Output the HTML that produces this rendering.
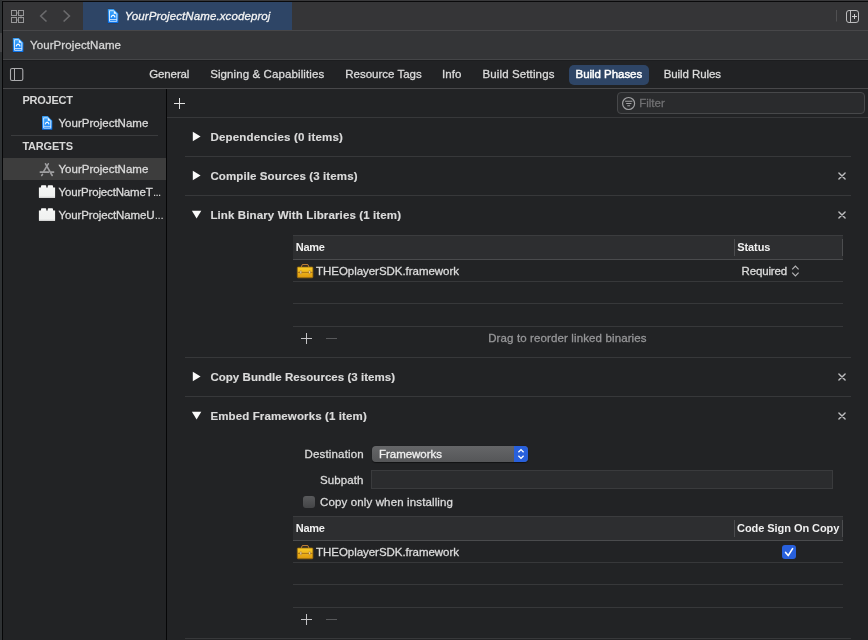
<!DOCTYPE html>
<html><head><meta charset="utf-8"><title>Xcode</title>
<style>
html,body{margin:0;padding:0;}
body{width:868px;height:640px;overflow:hidden;position:relative;background:#222325;font-family:"Liberation Sans",sans-serif;}
.a{position:absolute;}
.t{position:absolute;white-space:pre;line-height:1;-webkit-text-stroke:0.3px currentColor;}
#txt{position:absolute;left:0;top:0;width:868px;height:640px;will-change:transform;}
svg{position:absolute;overflow:visible;}
.hl{position:absolute;height:1px;}
</style></head><body>
<!-- frame -->
<div class="a" style="left:0;top:0;width:868px;height:1px;background:#39393b"></div>
<div class="a" style="left:0;top:1px;width:868px;height:1px;background:#0a0a0b"></div>
<!-- toolbar row 1 -->
<div class="a" style="left:3px;top:2px;width:865px;height:28px;background:#353537"></div>
<div class="a" style="left:83px;top:2px;width:209px;height:28px;background:#2e4566"></div>
<div class="hl" style="left:3px;top:30px;width:865px;background:#474749"></div>
<!-- row 2 -->
<div class="a" style="left:3px;top:31px;width:865px;height:28px;background:#343537"></div>
<div class="hl" style="left:3px;top:59px;width:865px;background:#454648"></div>
<div class="hl" style="left:3px;top:60px;width:865px;background:#1c1d1f;z-index:1"></div>
<!-- tab row -->
<div class="a" style="left:3px;top:60px;width:865px;height:28px;background:#212224"></div>
<div class="hl" style="left:3px;top:88px;width:865px;background:#48484a"></div>
<!-- sidebar -->
<div class="a" style="left:3px;top:89px;width:163px;height:551px;background:#222325"></div>
<div class="a" style="left:166px;top:89px;width:1px;height:551px;background:#060607"></div>
<!-- left frame -->
<div class="a" style="left:0;top:0;width:2px;height:640px;background:#2f3234"></div>
<div class="a" style="left:0;top:33px;width:2px;height:19px;background:#444547"></div>
<div class="a" style="left:2px;top:1px;width:1px;height:639px;background:#060607"></div>
<!-- sidebar content -->
<div class="hl" style="left:11px;top:135px;width:147px;background:#3a3b3d"></div>
<div class="a" style="left:3px;top:158px;width:163px;height:22px;background:#3d3d3d"></div>
<!-- editor lines -->
<div class="hl" style="left:167px;top:117px;width:701px;background:#37383a"></div>
<div class="hl" style="left:185px;top:156px;width:666px;background:#37383a"></div>
<div class="hl" style="left:185px;top:195px;width:666px;background:#37383a"></div>
<div class="hl" style="left:185px;top:357px;width:666px;background:#37383a"></div>
<div class="hl" style="left:185px;top:396px;width:666px;background:#37383a"></div>
<div class="hl" style="left:185px;top:638px;width:666px;background:#37383a"></div>
<!-- build phases pill -->
<div class="a" style="left:569px;top:65px;width:80px;height:20px;border-radius:5px;background:#2e4566"></div>
<!-- filter field -->
<div class="a" style="left:617px;top:92px;width:248px;height:22px;border-radius:4px;background:#2a2b2d;border:1px solid #47484a;box-sizing:border-box"></div>
<!-- table 1 -->
<div class="a" style="left:293px;top:235px;width:550px;height:24px;background:#2d2e30;border-top:1px solid #3b3c3e;box-sizing:border-box"></div>
<div class="hl" style="left:293px;top:259px;width:550px;background:#4a4b4d"></div>
<div class="a" style="left:734px;top:239px;width:1px;height:17px;background:#4c4d4f"></div>
<div class="a" style="left:842px;top:239px;width:1px;height:17px;background:#4c4d4f"></div>
<div class="hl" style="left:293px;top:281px;width:550px;background:#37383a"></div>
<div class="hl" style="left:293px;top:303px;width:550px;background:#37383a"></div>
<div class="hl" style="left:293px;top:326px;width:550px;background:#37383a"></div>
<!-- table 2 -->
<div class="a" style="left:293px;top:516px;width:550px;height:24px;background:#2d2e30;border-top:1px solid #3b3c3e;box-sizing:border-box"></div>
<div class="hl" style="left:293px;top:540px;width:550px;background:#4a4b4d"></div>
<div class="a" style="left:734px;top:520px;width:1px;height:17px;background:#4c4d4f"></div>
<div class="a" style="left:842px;top:520px;width:1px;height:17px;background:#4c4d4f"></div>
<div class="hl" style="left:293px;top:562px;width:550px;background:#37383a"></div>
<div class="hl" style="left:293px;top:584px;width:550px;background:#37383a"></div>
<div class="hl" style="left:293px;top:607px;width:550px;background:#37383a"></div>
<!-- embed controls -->
<div class="a" style="left:372px;top:446px;width:156px;height:16px;border-radius:4px;background:linear-gradient(#656668,#555658);overflow:hidden;box-shadow:0 0.5px 1px rgba(0,0,0,0.5)"><div class="a" style="right:0;top:0;width:14px;height:16px;background:#2860dc"></div></div>
<div class="a" style="left:371px;top:470px;width:462px;height:19px;background:#2b2c2e;border:1px solid #3a3b3d;box-sizing:border-box"></div>
<div class="a" style="left:303px;top:496px;width:12px;height:12px;border-radius:3px;background:linear-gradient(#595a5c,#444547)"></div>
<div class="a" style="left:782px;top:545px;width:14px;height:14px;border-radius:3px;background:#2860dc"></div>
<svg width="868" height="640" viewBox="0 0 868 640" style="left:0;top:0">
<defs>
<linearGradient id="gb" x1="0" y1="0" x2="0" y2="1"><stop offset="0" stop-color="#3fa9ff"/><stop offset="1" stop-color="#0b78f4"/></linearGradient>
<linearGradient id="gy" x1="0" y1="0" x2="0" y2="1"><stop offset="0" stop-color="#f7ca28"/><stop offset="0.45" stop-color="#f0b81b"/><stop offset="0.55" stop-color="#ecb018"/><stop offset="1" stop-color="#dc980e"/></linearGradient>
<linearGradient id="gw" x1="0" y1="0" x2="0" y2="1"><stop offset="0" stop-color="#ffffff"/><stop offset="0.25" stop-color="#f3f4f3"/><stop offset="0.85" stop-color="#f0f1f0"/><stop offset="1" stop-color="#cfcfcf"/></linearGradient>
<g id="doc">
 <path d="M0.1 0.6 Q0.1 0 0.7 0 L6 0 L10.7 4.7 L10.7 13.6 Q10.7 14.2 10.1 14.2 L0.7 14.2 Q0.1 14.2 0.1 13.6 Z" fill="url(#gb)" stroke="rgba(10,30,70,0.35)" stroke-width="0.5"/>
 <path d="M6 1.8 L1.8 1.8 L1.8 12.4 L9.1 12.4 L9.1 5" fill="none" stroke="#e4f1ff" stroke-width="0.85"/>
 <path d="M6.1 1.5 L9.4 4.8 L6.1 4.8 Z" fill="#f6faff"/>
 <path d="M1.8 10.6 L9.1 10.6" stroke="#e4f1ff" stroke-width="0.8"/>
 <path d="M3.5 8.5 Q3.7 6.5 5.4 6.2 Q7.1 6.5 7.3 8.5" fill="none" stroke="#f2f8ff" stroke-width="1.3"/>
</g>
<g id="tool">
 <path d="M4.2 3.2 L5.3 0.6 L10.9 0.6 L12 3.2" fill="none" stroke="#c98535" stroke-width="1"/>
 <rect x="0.3" y="3" width="15.6" height="10.8" rx="0.8" fill="url(#gy)" stroke="#966810" stroke-width="0.8"/>
 <path d="M0.3 8.4 L15.9 8.4" stroke="#a06c14" stroke-width="0.9"/>
 <rect x="3.1" y="6.8" width="1.5" height="2.9" rx="0.5" fill="#fbf3dc" stroke="#a06c14" stroke-width="0.6"/>
 <rect x="11.9" y="6.8" width="1.5" height="2.9" rx="0.5" fill="#fbf3dc" stroke="#a06c14" stroke-width="0.6"/>
</g>
<g id="blk">
 <path d="M0 2.3 L1.9 2.3 L2.3 0.4 Q2.4 0 2.9 0 L6.6 0 Q7.1 0 7.2 0.4 L7.6 2.3 Q8.1 2.9 8.6 2.3 L9 0.4 Q9.1 0 9.6 0 L13.3 0 Q13.8 0 13.9 0.4 L14.3 2.3 L16.2 2.3 L16.2 12.2 Q16.2 12.7 15.7 12.7 L0.5 12.7 Q0 12.7 0 12.2 Z" fill="url(#gw)"/>
</g>
<g id="xx"><path d="M-3.1 -3.1 L3.1 3.1 M3.1 -3.1 L-3.1 3.1" stroke="#bdbdbf" stroke-width="1.4" fill="none" stroke-linecap="round"/></g>
<g id="tri"><path d="M0 0 L7.8 4.7 L0 9.4 Z" fill="#fafafa"/></g>
<g id="trid"><path d="M0 0 L9.4 0 L4.7 7.7 Z" fill="#fafafa"/></g>
<g id="pm">
 <path d="M-5.5 0 L5.5 0 M0 -5.5 L0 5.5" stroke="#c4c4c6" stroke-width="1" fill="none"/>
 <path d="M19.5 0 L30.5 0" stroke="#58595b" stroke-width="1" fill="none"/>
</g>
</defs>
<!-- grid icon -->
<g fill="none" stroke="#979799" stroke-width="1">
 <rect x="11.5" y="10.5" width="5" height="5"/><rect x="18.5" y="10.5" width="5" height="5"/>
 <rect x="11.5" y="17.5" width="5" height="5"/><rect x="18.5" y="17.5" width="5" height="5"/>
 <path d="M16.5 13 L19.5 13 M16.5 20 L18.5 20 M21 15.5 L21 18.5" stroke-width="0.9"/>
</g>
<!-- nav chevrons -->
<path d="M46.5 10.5 L40.7 16 L46.5 21.5" fill="none" stroke="#6b6b6d" stroke-width="1.6"/>
<path d="M63.6 10.5 L69.4 16 L63.6 21.5" fill="none" stroke="#6b6b6d" stroke-width="1.6"/>
<!-- doc icons -->
<use href="#doc" x="107.7" y="8.9"/>
<use href="#doc" x="12.7" y="37.9"/>
<g transform="translate(41.9,116.1) scale(0.97)"><use href="#doc"/></g>
<!-- right top icon -->
<path d="M836.5 10 L836.5 21.5" stroke="#505052" stroke-width="1"/>
<rect x="846.5" y="10.5" width="12" height="12" rx="2.5" fill="none" stroke="#bdbdbf" stroke-width="1"/>
<path d="M850.5 10.5 L850.5 22.5" stroke="#bdbdbf" stroke-width="1"/>
<path d="M852 16.5 L857 16.5 M854.5 14 L854.5 19" stroke="#d0d0d2" stroke-width="1"/>
<!-- sidebar toggle -->
<rect x="10.5" y="68.5" width="12.3" height="12" rx="1.6" fill="none" stroke="#acacae" stroke-width="1.1"/>
<path d="M14.5 68.5 L14.5 80.5" stroke="#acacae" stroke-width="1"/>
<!-- plus -->
<path d="M174 103.5 L185 103.5 M179.5 98 L179.5 109" stroke="#e2e2e2" stroke-width="1" fill="none"/>
<!-- filter icon -->
<circle cx="628.6" cy="103.5" r="6" fill="none" stroke="#a2a2a4" stroke-width="1.2"/>
<path d="M625.1 101.3 L632.4 101.3 M626.2 103.5 L631.4 103.5 M627.3 105.7 L630.1 105.7" stroke="#a2a2a4" stroke-width="1.1"/>
<!-- app icon -->
<g fill="none" stroke="#9e9ea0" stroke-width="1.6" stroke-linecap="round">
 <path d="M48.3 163.8 L43.7 171.4 M42.5 174.4 L41.7 175.5"/>
 <path d="M45.5 163.8 L52.2 175.5"/>
 <path d="M39.7 172.2 L49 172.2 M50.9 172.2 L54.2 172.2" stroke-linecap="butt" stroke-width="1.7"/>
</g>
<!-- block icons -->
<use href="#blk" x="38.9" y="185.2"/>
<use href="#blk" x="38.9" y="208.2"/>
<!-- triangles -->
<use href="#tri" x="192.8" y="131.8"/>
<use href="#tri" x="192.8" y="170.8"/>
<use href="#trid" x="191.9" y="210.8"/>
<use href="#tri" x="192.8" y="371.8"/>
<use href="#trid" x="191.9" y="411.8"/>
<!-- x icons -->
<use href="#xx" x="842" y="176"/>
<use href="#xx" x="842" y="215"/>
<use href="#xx" x="842" y="377"/>
<use href="#xx" x="842" y="416"/>
<!-- toolbox icons -->
<use href="#tool" x="297" y="264"/>
<use href="#tool" x="297" y="545"/>
<!-- required chevrons -->
<path d="M792.2 269.4 L795.4 266.2 L798.6 269.4 M792.2 272.6 L795.4 275.8 L798.6 272.6" fill="none" stroke="#b4b4b6" stroke-width="1.2"/>
<!-- dropdown chevrons -->
<path d="M518.4 452.2 L521 449.6 L523.6 452.2 M518.4 455.8 L521 458.4 L523.6 455.8" fill="none" stroke="#ffffff" stroke-width="1.3"/>
<!-- checkmark -->
<path d="M785.6 552.4 L788.2 555.6 L792.6 548.6" fill="none" stroke="#ffffff" stroke-width="1.6" stroke-linecap="round" stroke-linejoin="round"/>
<!-- plus/minus -->
<use href="#pm" x="306.5" y="338.5"/>
<use href="#pm" x="306.5" y="619.5"/>
</svg>

<div id="txt">
<span class="t" style="left:124.7px;top:11.00px;font-size:11.5px;color:#f4f4f4;letter-spacing:0.105px;font-style:italic;">YourProjectName.xcodeproj</span>
<span class="t" style="left:30.0px;top:40.00px;font-size:11.5px;color:#d6d6d6;letter-spacing:0.092px;">YourProjectName</span>
<span class="t" style="left:149.3px;top:69.00px;font-size:11.5px;color:#dbdbdb;letter-spacing:-0.137px;">General</span>
<span class="t" style="left:210.2px;top:69.00px;font-size:11.5px;color:#dbdbdb;letter-spacing:0.101px;">Signing &amp; Capabilities</span>
<span class="t" style="left:345.3px;top:69.00px;font-size:11.5px;color:#dbdbdb;letter-spacing:-0.008px;">Resource Tags</span>
<span class="t" style="left:442.1px;top:69.00px;font-size:11.5px;color:#dbdbdb;letter-spacing:0.071px;">Info</span>
<span class="t" style="left:482.5px;top:69.00px;font-size:11.5px;color:#dbdbdb;letter-spacing:0.121px;">Build Settings</span>
<span class="t" style="left:575.5px;top:69.00px;font-size:11.5px;color:#ffffff;letter-spacing:-0.039px;-webkit-text-stroke:0.45px currentColor;">Build Phases</span>
<span class="t" style="left:663.7px;top:69.00px;font-size:11.5px;color:#dbdbdb;letter-spacing:-0.087px;">Build Rules</span>
<span class="t" style="left:22.4px;top:95.00px;font-size:11px;color:#d8d8d8;letter-spacing:-0.228px;font-weight:700;-webkit-text-stroke:0;">PROJECT</span>
<span class="t" style="left:58.5px;top:118.00px;font-size:11.5px;color:#dbdbdb;letter-spacing:0.006px;">YourProjectName</span>
<span class="t" style="left:22.4px;top:141.00px;font-size:11px;color:#d8d8d8;letter-spacing:-0.192px;font-weight:700;-webkit-text-stroke:0;">TARGETS</span>
<span class="t" style="left:58.5px;top:164.00px;font-size:11.5px;color:#dbdbdb;letter-spacing:0.006px;">YourProjectName</span>
<span class="t" style="left:58.5px;top:187.00px;font-size:11.5px;color:#dbdbdb;letter-spacing:-0.169px;">YourProjectNameT</span>
<span class="t" style="left:153.0px;top:187.00px;font-size:11.5px;color:#dbdbdb;letter-spacing:-0.750px;-webkit-text-stroke:0.05px currentColor;">...</span>
<span class="t" style="left:58.5px;top:210.00px;font-size:11.5px;color:#dbdbdb;letter-spacing:-0.128px;">YourProjectNameU</span>
<span class="t" style="left:154.8px;top:210.00px;font-size:11.5px;color:#dbdbdb;letter-spacing:-0.400px;-webkit-text-stroke:0.05px currentColor;">...</span>
<span class="t" style="left:639.2px;top:98.00px;font-size:11.5px;color:#707072;letter-spacing:0.007px;">Filter</span>
<span class="t" style="left:210.4px;top:132.00px;font-size:11.5px;color:#dbdbdb;letter-spacing:0.192px;font-weight:700;-webkit-text-stroke:0;-webkit-text-stroke:0.15px currentColor;">Dependencies (0 items)</span>
<span class="t" style="left:210.4px;top:171.00px;font-size:11.5px;color:#dbdbdb;letter-spacing:0.111px;font-weight:700;-webkit-text-stroke:0;-webkit-text-stroke:0.15px currentColor;">Compile Sources (3 items)</span>
<span class="t" style="left:210.4px;top:210.00px;font-size:11.5px;color:#dbdbdb;letter-spacing:0.121px;font-weight:700;-webkit-text-stroke:0;-webkit-text-stroke:0.15px currentColor;">Link Binary With Libraries (1 item)</span>
<span class="t" style="left:210.4px;top:372.00px;font-size:11.5px;color:#dbdbdb;letter-spacing:0.043px;font-weight:700;-webkit-text-stroke:0;-webkit-text-stroke:0.15px currentColor;">Copy Bundle Resources (3 items)</span>
<span class="t" style="left:210.4px;top:411.00px;font-size:11.5px;color:#dbdbdb;letter-spacing:0.125px;font-weight:700;-webkit-text-stroke:0;-webkit-text-stroke:0.15px currentColor;">Embed Frameworks (1 item)</span>
<span class="t" style="left:295.7px;top:242.00px;font-size:11px;color:#f0f0f0;letter-spacing:-0.256px;font-weight:700;-webkit-text-stroke:0;">Name</span>
<span class="t" style="left:737.2px;top:242.00px;font-size:11px;color:#f0f0f0;letter-spacing:-0.085px;font-weight:700;-webkit-text-stroke:0;">Status</span>
<span class="t" style="left:316.0px;top:266.00px;font-size:11.5px;color:#dbdbdb;letter-spacing:-0.036px;">THEOplayerSDK.framework</span>
<span class="t" style="left:741.5px;top:266.00px;font-size:11.5px;color:#dbdbdb;letter-spacing:-0.139px;">Required</span>
<span class="t" style="left:488.2px;top:333.00px;font-size:11.5px;color:#969698;letter-spacing:0.123px;">Drag to reorder linked binaries</span>
<span class="t" style="left:304.6px;top:449.00px;font-size:11.5px;color:#dbdbdb;letter-spacing:0.155px;">Destination</span>
<span class="t" style="left:379.1px;top:449.00px;font-size:11.5px;color:#f0f0f0;letter-spacing:-0.052px;">Frameworks</span>
<span class="t" style="left:320.0px;top:475.00px;font-size:11.5px;color:#dbdbdb;letter-spacing:0.090px;">Subpath</span>
<span class="t" style="left:320.0px;top:497.00px;font-size:11.5px;color:#dbdbdb;letter-spacing:0.134px;">Copy only when installing</span>
<span class="t" style="left:295.7px;top:523.00px;font-size:11px;color:#f0f0f0;letter-spacing:-0.256px;font-weight:700;-webkit-text-stroke:0;">Name</span>
<span class="t" style="left:737.0px;top:523.00px;font-size:11px;color:#f0f0f0;letter-spacing:-0.055px;font-weight:700;-webkit-text-stroke:0;">Code Sign On Copy</span>
<span class="t" style="left:316.0px;top:547.00px;font-size:11.5px;color:#dbdbdb;letter-spacing:-0.036px;">THEOplayerSDK.framework</span>
</div>
</body></html>
